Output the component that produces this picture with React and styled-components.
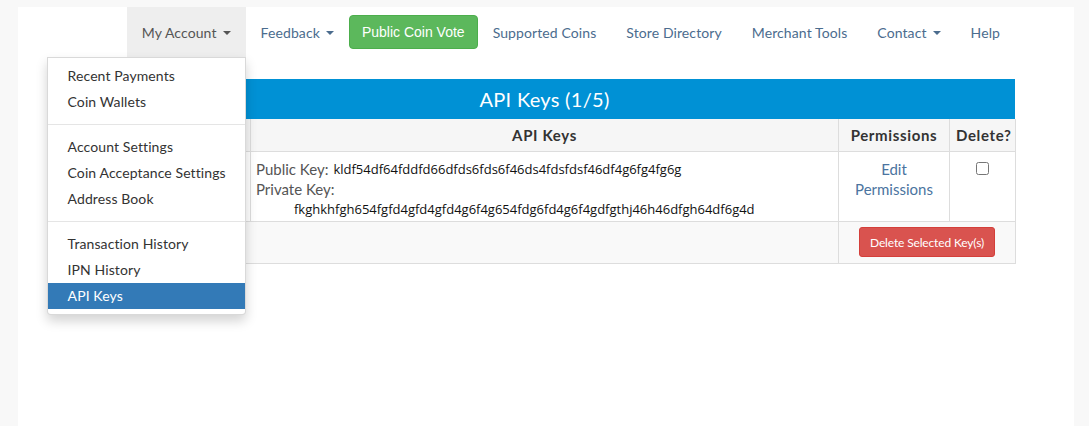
import styled, { createGlobalStyle } from "styled-components";

const GlobalStyle = createGlobalStyle`
  body {
    margin: 0;
    background: #f8f8f8;
    font-family: Lato, "Open Sans", sans-serif;
  }
`;

const Page = styled.div`
  min-height: 426px;
  margin: 0 15px 0 18px;
  background: #fff;
`;

const Container = styled.div`
  width: 941px;
  margin: 0 0 0 56px;
`;

const Navbar = styled.ul`
  display: flex;
  justify-content: flex-end;
  list-style: none;
  margin: 7px 0 0;
  padding: 0;
  height: 50px;
`;

const NavItem = styled.li`
  position: relative;
  display: flex;
  align-items: flex-start;
`;

const NavLink = styled.a`
  display: flex;
  align-items: center;
  height: 50px;
  padding: 0 15px;
  font-size: 14px;
  letter-spacing: 0.1px;
  color: ${(props) => (props.$open ? "#555" : "#4b6c8e")};
  background: ${(props) => (props.$open ? "#eee" : "transparent")};
  text-decoration: none;
  cursor: pointer;
`;

const Caret = styled.span`
  display: inline-block;
  margin-left: 6px;
  margin-top: 2px;
  border-top: 4px solid currentColor;
  border-left: 4px solid transparent;
  border-right: 4px solid transparent;
`;

const VoteButton = styled.a`
  display: flex;
  align-items: center;
  box-sizing: border-box;
  height: 34px;
  margin-top: 8px;
  padding: 0 12px;
  background: #5cb85c;
  border: 1px solid #4cae4c;
  border-radius: 4px;
  color: #fff;
  font-family: "Liberation Sans", Arial, sans-serif;
  font-size: 14px;
  text-decoration: none;
`;

const Dropdown = styled.div`
  position: absolute;
  top: 50px;
  right: 0;
  z-index: 10;
  box-sizing: border-box;
  width: 199px;
  padding: 5px 0;
  background: #fff;
  border: 1px solid rgba(0, 0, 0, 0.15);
  border-radius: 0 0 4px 4px;
  box-shadow: 0 6px 12px rgba(0, 0, 0, 0.175);
`;

const MenuItem = styled.a`
  display: block;
  padding: 3px 20px;
  line-height: 20px;
  font-size: 14px;
  letter-spacing: 0.1px;
  color: ${(props) => (props.$active ? "#fff" : "#333")};
  background: ${(props) => (props.$active ? "#337ab7" : "transparent")};
  white-space: nowrap;
`;

const Divider = styled.div`
  height: 1px;
  margin: 9px 0;
  background: #e5e5e5;
`;

const Panel = styled.div`
  margin-top: 22px;
`;

const PanelHeading = styled.div`
  height: 40px;
  display: flex;
  align-items: center;
  justify-content: center;
  background: #0091d5;
  color: #fff;
  font-size: 20px;
  letter-spacing: 0.3px;
`;

const Table = styled.table`
  width: 100%;
  border-collapse: collapse;
  table-layout: fixed;
  font-size: 15px;
  color: #333;
`;

const Th = styled.th`
  height: 32px;
  padding: 0 6px;
  background: #f6f6f6;
  border: 1px solid #ddd;
  border-top: 0;
  font-size: 15px;
  font-weight: 700;
  letter-spacing: 0.65px;
  text-align: center;
  white-space: nowrap;
`;

const Td = styled.td`
  padding: ${(props) => props.$pad || "7px 5px 2px"};
  border: 1px solid #ddd;
  vertical-align: top;
  text-align: ${(props) => props.$align || "left"};
  background: ${(props) => props.$bg || "#fff"};
  line-height: 20px;
`;

const KeyLine = styled.div`
  display: flex;
  gap: 5px;
  color: #555;
  padding-left: ${(props) => props.$indent || 0}px;
`;

const KeyValue = styled.span`
  font-family: "Open Sans", sans-serif;
  font-size: 13px;
  color: #111;
`;

const EditLink = styled.a`
  display: block;
  color: #4b74a0;
  text-decoration: none;
`;

const Check = styled.input`
  margin: 2px 0 0;
  width: 13px;
  height: 13px;
`;

const DeleteButton = styled.button`
  height: 30px;
  padding: 0 10px;
  background: #d9534f;
  border: 1px solid #d43f3a;
  border-radius: 3px;
  color: #fff;
  font-family: Lato, sans-serif;
  font-size: 12px;
  letter-spacing: -0.15px;
`;

const navLinks = ["Supported Coins", "Store Directory", "Merchant Tools"];

function App() {
  return (
    <Page>
      <GlobalStyle />
      <Container>
        <Navbar>
          <NavItem>
            <NavLink $open>
              My Account <Caret />
            </NavLink>
            <Dropdown>
              <MenuItem>Recent Payments</MenuItem>
              <MenuItem>Coin Wallets</MenuItem>
              <Divider />
              <MenuItem>Account Settings</MenuItem>
              <MenuItem>Coin Acceptance Settings</MenuItem>
              <MenuItem>Address Book</MenuItem>
              <Divider />
              <MenuItem>Transaction History</MenuItem>
              <MenuItem>IPN History</MenuItem>
              <MenuItem $active>API Keys</MenuItem>
            </Dropdown>
          </NavItem>
          <NavItem>
            <NavLink>
              Feedback <Caret />
            </NavLink>
          </NavItem>
          <NavItem>
            <VoteButton>Public Coin Vote</VoteButton>
          </NavItem>
          {navLinks.map((label) => (
            <NavItem key={label}>
              <NavLink>{label}</NavLink>
            </NavItem>
          ))}
          <NavItem>
            <NavLink>
              Contact <Caret />
            </NavLink>
          </NavItem>
          <NavItem>
            <NavLink>Help</NavLink>
          </NavItem>
        </Navbar>

        <Panel>
          <PanelHeading>API Keys (1/5)</PanelHeading>
          <Table>
            <colgroup>
              <col style={{ width: 176 }} />
              <col style={{ width: 588 }} />
              <col style={{ width: 111 }} />
              <col style={{ width: 66 }} />
            </colgroup>
            <thead>
              <tr>
                <Th></Th>
                <Th>API Keys</Th>
                <Th>Permissions</Th>
                <Th>Delete?</Th>
              </tr>
            </thead>
            <tbody>
              <tr>
                <Td></Td>
                <Td>
                  <KeyLine>
                    Public Key:
                    <KeyValue>kldf54df64fddfd66dfds6fds6f46ds4fdsfdsf46df4g6fg4fg6g</KeyValue>
                  </KeyLine>
                  <KeyLine>Private Key:</KeyLine>
                  <KeyLine $indent={38}>
                    <KeyValue>fkghkhfgh654fgfd4gfd4gfd4g6f4g654fdg6fd4g6f4gdfgthj46h46dfgh64df6g4d</KeyValue>
                  </KeyLine>
                </Td>
                <Td $align="center">
                  <EditLink>
                    Edit
                    <br />
                    Permissions
                  </EditLink>
                </Td>
                <Td $align="center">
                  <Check type="checkbox" />
                </Td>
              </tr>
              <tr>
                <Td colSpan={2} $bg="#f9f9f9" $pad="0"></Td>
                <Td colSpan={2} $bg="#f9f9f9" $align="center" $pad="5px 0 6px">
                  <DeleteButton>Delete Selected Key(s)</DeleteButton>
                </Td>
              </tr>
            </tbody>
          </Table>
        </Panel>
      </Container>
    </Page>
  );
}

export default App;
